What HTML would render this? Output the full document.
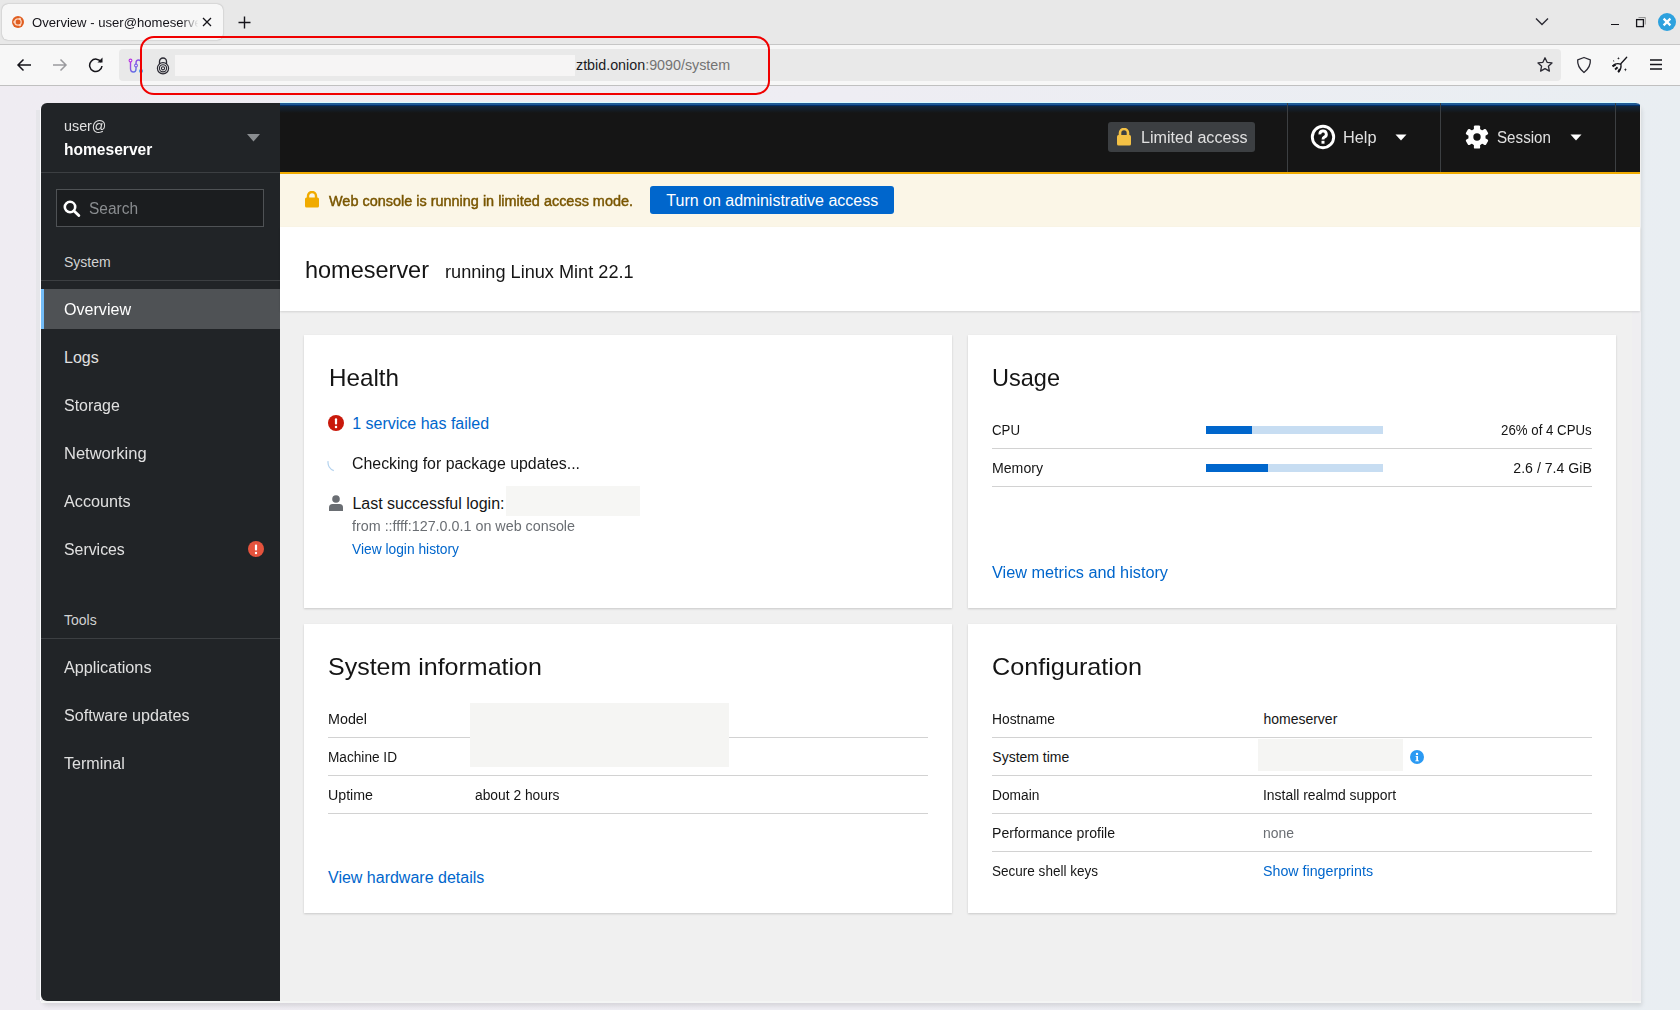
<!DOCTYPE html>
<html><head><meta charset="utf-8"><title>Overview</title>
<style>
*{box-sizing:border-box;margin:0;padding:0}
html,body{width:1680px;height:1010px;overflow:hidden;background:linear-gradient(90deg,#efecf2 0%,#eeedf3 50%,#e9eef2 100%);font-family:"Liberation Sans",sans-serif;position:relative}
.r{position:absolute}
.t{position:absolute;white-space:nowrap}
</style></head><body>
<div class="r" style="left:0px;top:0px;width:1680px;height:44px;background:#e8e8e8;"></div>
<div class="r" style="left:0px;top:44px;width:1680px;height:1px;background:#c6c6c6;"></div>
<div class="r" style="left:0px;top:45px;width:1680px;height:40px;background:#f7f7f7;"></div>
<div class="r" style="left:0px;top:85px;width:1680px;height:1px;background:#c0c0c0;"></div>
<div class="r" style="left:2px;top:4px;width:221px;height:36px;background:#f7f7f7;border-radius:6px;box-shadow:0 0 1.5px rgba(0,0,0,.35)"></div>
<svg class="r" style="left:11px;top:15px" width="14" height="14" viewBox="0 0 14 14"><circle cx="7" cy="7" r="6" fill="#e05e20"/><circle cx="7" cy="7" r="3.2" fill="none" stroke="#fbd3bd" stroke-width="1.3"/><circle cx="3.5" cy="7" r="1.2" fill="#fbd3bd"/><circle cx="8.8" cy="3.9" r="1.2" fill="#fbd3bd"/><circle cx="8.8" cy="10.1" r="1.2" fill="#fbd3bd"/></svg>
<div class="t" style="left:32.00px;top:16.00px;font-size:13.4px;line-height:13.4px;color:#15141a;font-weight:400;width:170px;transform:scaleX(0.978);transform-origin:left center;overflow:hidden;-webkit-mask-image:linear-gradient(90deg,#000 90%,transparent);mask-image:linear-gradient(90deg,#000 90%,transparent)">Overview - user@homeserver</div>
<svg class="r" style="left:202px;top:17px" width="10" height="10" viewBox="0 0 10 10"><path d="M1 1L9 9M9 1L1 9" stroke="#15141a" stroke-width="1.3"/></svg>
<svg class="r" style="left:238px;top:16px" width="13" height="13" viewBox="0 0 13 13"><path d="M6.5 0.5V12.5M0.5 6.5H12.5" stroke="#15141a" stroke-width="1.4"/></svg>
<svg class="r" style="left:1535px;top:17px" width="14" height="9" viewBox="0 0 14 9"><path d="M1 1.5L7 7.5L13 1.5" fill="none" stroke="#2b2a33" stroke-width="1.4"/></svg>
<div class="r" style="left:1611px;top:23.6px;width:8px;height:1.5px;background:#15141a;"></div>
<svg class="r" style="left:1635px;top:16px" width="12" height="12" viewBox="0 0 12 12"><path d="M3.5 1.5H10.3V8.5" fill="none" stroke="#8a8a8a" stroke-width="0.9"/><rect x="1.6" y="3.6" width="6.8" height="7" fill="none" stroke="#15141a" stroke-width="1.3"/></svg>
<svg class="r" style="left:1657px;top:12px" width="20" height="20" viewBox="0 0 20 20"><circle cx="10" cy="10" r="9" fill="#2da1de"/><path d="M6.6 6.6L13.4 13.4M13.4 6.6L6.6 13.4" stroke="#fff" stroke-width="2.2"/></svg>
<svg class="r" style="left:16px;top:58px" width="16" height="14" viewBox="0 0 16 14"><path d="M15 7H2.2M7.5 1.5L2 7L7.5 12.5" fill="none" stroke="#15141a" stroke-width="1.5"/></svg>
<svg class="r" style="left:52px;top:58px" width="16" height="14" viewBox="0 0 16 14"><path d="M1 7H13.8M8.5 1.5L14 7L8.5 12.5" fill="none" stroke="#9a9a9e" stroke-width="1.5"/></svg>
<svg class="r" style="left:88px;top:57px" width="16" height="16" viewBox="0 0 16 16"><path d="M13.2 5.2A6.2 6.2 0 1 0 14 9" fill="none" stroke="#15141a" stroke-width="1.5"/><path d="M9.5 5.5H14.5V0.5Z" fill="#15141a"/></svg>
<div class="r" style="left:119px;top:49px;width:1442px;height:32px;background:#e9e9e9;border-radius:4px"></div>
<svg class="r" style="left:126.5px;top:57.5px" width="16" height="16" viewBox="0 0 16 16"><defs><linearGradient id="pg" x1="0" y1="0" x2="1" y2="1"><stop offset="0" stop-color="#b833e1"/><stop offset="1" stop-color="#3a8ee6"/></linearGradient></defs><path d="M3.5 2.5V10.5Q3.5 14 6.5 14Q9 14 9 11V5Q9 2 11.5 2Q14 2 14 5V13" fill="none" stroke="url(#pg)" stroke-width="1.4"/><circle cx="3.5" cy="2.5" r="1.4" fill="#f9f9fb" stroke="#b833e1" stroke-width="1.1"/><circle cx="9" cy="7.5" r="1.4" fill="#f9f9fb" stroke="#7a5ce5" stroke-width="1.1"/><circle cx="14" cy="13" r="1.4" fill="#f9f9fb" stroke="#3a8ee6" stroke-width="1.1"/></svg>
<svg class="r" style="left:156px;top:57px" width="14" height="18" viewBox="0 0 14 18"><path d="M3.5 7V4.5A3.5 3.5 0 0 1 10.5 4.5V7" fill="none" stroke="#2b2a33" stroke-width="1.3"/><circle cx="7" cy="11.3" r="5.6" fill="none" stroke="#2b2a33" stroke-width="1.2"/><circle cx="7" cy="11.3" r="3.6" fill="none" stroke="#2b2a33" stroke-width="1.1"/><circle cx="7" cy="11.3" r="1.6" fill="none" stroke="#2b2a33" stroke-width="1.1"/></svg>
<div class="r" style="left:175px;top:55px;width:400px;height:21px;background:#f6f5f5;"></div>
<div class="t" style="left:576.00px;top:58.00px;font-size:14.3px;line-height:14.3px;color:#1b1b1f;font-weight:400;">ztbid.onion<span style="color:#737373">:9090/system</span></div>
<svg class="r" style="left:1536px;top:56px" width="18" height="18" viewBox="0 0 18 18"><path d="M9 1.8L11.1 6.3L16 6.9L12.4 10.2L13.4 15.1L9 12.6L4.6 15.1L5.6 10.2L2 6.9L6.9 6.3Z" fill="none" stroke="#2b2a33" stroke-width="1.3" stroke-linejoin="round"/></svg>
<svg class="r" style="left:1575px;top:56px" width="18" height="18" viewBox="0 0 18 18"><path d="M9 1.5L15.3 3.8Q16 11 9 16.5Q2 11 2.7 3.8Z" fill="none" stroke="#2b2a33" stroke-width="1.3" stroke-linejoin="round"/></svg>
<svg class="r" style="left:1611px;top:56px" width="18" height="18" viewBox="0 0 18 18"><path d="M15.7 1.3L9.8 7.7" stroke="#15141a" stroke-width="1.3" stroke-linecap="round"/><path d="M1.4 10Q5.8 6.2 10 8.6Q10.6 12.6 7.4 16.4" fill="none" stroke="#15141a" stroke-width="1.2"/><path d="M4.6 8.6L1.6 10.3M6.6 11.2L4.1 13.4M8.9 13.1L7.2 16" stroke="#15141a" stroke-width="2"/><path d="M7.46 0.8599999999999999Q7.46 2.36 8.96 2.36Q7.46 2.36 7.46 3.86Q7.46 2.36 5.96 2.36Q7.46 2.36 7.46 0.8599999999999999Z" fill="#15141a"/><path d="M14.4 11.799999999999999Q14.4 13.7 15.9 13.7Q14.4 13.7 14.4 15.6Q14.4 13.7 12.9 13.7Q14.4 13.7 14.4 11.799999999999999Z" fill="#15141a"/><path d="M2.2 4L3.6 5.3L2.2 5.6Z" fill="#15141a"/></svg>
<svg class="r" style="left:1649px;top:58px" width="14" height="13" viewBox="0 0 14 13"><path d="M1 2H13M1 6.5H13M1 11H13" stroke="#15141a" stroke-width="1.4"/></svg>
<div class="r" style="left:140px;top:35.9px;width:630px;height:59.3px;background:transparent;border:2.2px solid #f00000;border-radius:14px"></div>
<div class="r" style="left:41px;top:103px;width:1600px;height:900px;background:#f0f0f0;border-radius:6px 6px 0 6px;box-shadow:1px 3px 4px rgba(0,0,0,.10)"></div>
<div class="r" style="left:41px;top:1001px;width:1600px;height:2px;background:#f4f5f4;"></div>
<div class="r" style="left:36px;top:110px;width:4px;height:890px;background:#e6e6ea;"></div>
<div class="r" style="left:40px;top:108px;width:1px;height:893px;background:#fbfbfd;"></div>
<div class="r" style="left:1632px;top:311px;width:9px;height:690px;background:#efeef1;"></div>
<div class="r" style="left:41px;top:103px;width:239px;height:898px;background:#212427;border-radius:6px 0 0 6px"></div>
<div class="t" style="left:64.00px;top:118.00px;font-size:15px;line-height:15px;color:#e0e0e0;font-weight:400;transform:scaleX(0.9548);transform-origin:left center;">user@</div>
<div class="t" style="left:64.00px;top:142.00px;font-size:16px;line-height:16px;color:#ffffff;font-weight:700;transform:scaleX(0.9733);transform-origin:left center;">homeserver</div>
<svg class="r" style="left:247px;top:134px" width="13" height="8" viewBox="0 0 13 8"><path d="M0 0H13L6.5 7.5Z" fill="#8a8d90"/></svg>
<div class="r" style="left:41px;top:172px;width:239px;height:1px;background:#3c3f42;"></div>
<div class="r" style="left:56px;top:189px;width:208px;height:38px;background:#1b1d1f;border:1px solid #4f5255"></div>
<svg class="r" style="left:63px;top:199.5px" width="18" height="17" viewBox="0 0 18 17"><circle cx="7" cy="7" r="5.2" fill="none" stroke="#fff" stroke-width="2.6"/><path d="M10.8 10.8L15.8 15.6" stroke="#fff" stroke-width="2.8" stroke-linecap="round"/></svg>
<div class="t" style="left:89.40px;top:201.00px;font-size:16px;line-height:16px;color:#8a8d90;font-weight:400;transform:scaleX(0.9666);transform-origin:left center;">Search</div>
<div class="t" style="left:64.00px;top:255.00px;font-size:14px;line-height:14px;color:#d2d2d2;font-weight:400;">System</div>
<div class="r" style="left:41px;top:280px;width:239px;height:1px;background:#3c3f42;"></div>
<div class="r" style="left:41px;top:289px;width:239px;height:40px;background:#4f5255;"></div>
<div class="r" style="left:41px;top:289px;width:3px;height:40px;background:#73bcf7;"></div>
<div class="t" style="left:64.00px;top:302.00px;font-size:16px;line-height:16px;color:#ffffff;font-weight:400;transform:scaleX(1.0048);transform-origin:left center;">Overview</div>
<div class="t" style="left:64.00px;top:350.00px;font-size:16px;line-height:16px;color:#e0e0e0;font-weight:400;">Logs</div>
<div class="t" style="left:64.00px;top:398.00px;font-size:16px;line-height:16px;color:#e0e0e0;font-weight:400;transform:scaleX(0.9957);transform-origin:left center;">Storage</div>
<div class="t" style="left:64.00px;top:446.00px;font-size:16px;line-height:16px;color:#e0e0e0;font-weight:400;transform:scaleX(1.0321);transform-origin:left center;">Networking</div>
<div class="t" style="left:64.00px;top:494.00px;font-size:16px;line-height:16px;color:#e0e0e0;font-weight:400;transform:scaleX(1.0135);transform-origin:left center;">Accounts</div>
<div class="t" style="left:64.00px;top:542.00px;font-size:16px;line-height:16px;color:#e0e0e0;font-weight:400;transform:scaleX(0.9910);transform-origin:left center;">Services</div>
<svg class="r" style="left:248px;top:541px" width="16" height="16" viewBox="0 0 16 16"><circle cx="8" cy="8" r="8" fill="#e5533d"/><rect x="6.9" y="3.5" width="2.2" height="6" rx="1" fill="#fff"/><circle cx="8" cy="12" r="1.2" fill="#fff"/></svg>
<div class="t" style="left:64.00px;top:613.00px;font-size:14px;line-height:14px;color:#d2d2d2;font-weight:400;">Tools</div>
<div class="r" style="left:41px;top:638px;width:239px;height:1px;background:#3c3f42;"></div>
<div class="t" style="left:64.00px;top:660.00px;font-size:16px;line-height:16px;color:#e0e0e0;font-weight:400;transform:scaleX(1.0142);transform-origin:left center;">Applications</div>
<div class="t" style="left:64.00px;top:708.00px;font-size:16px;line-height:16px;color:#e0e0e0;font-weight:400;transform:scaleX(1.0078);transform-origin:left center;">Software updates</div>
<div class="t" style="left:64.00px;top:756.00px;font-size:16px;line-height:16px;color:#e0e0e0;font-weight:400;transform:scaleX(1.0056);transform-origin:left center;">Terminal</div>
<div class="r" style="left:280px;top:103px;width:1360px;height:69px;background:#151515;border-top-right-radius:6px;overflow:hidden"></div>
<div class="r" style="left:280px;top:102px;width:1356px;height:1px;background:#d9fbff;"></div>
<div class="r" style="left:280px;top:103px;width:1360px;height:2px;background:#1f5a96;border-top-right-radius:6px 2px"></div>
<div class="r" style="left:280px;top:105px;width:1360px;height:1px;background:#002f6b;"></div>
<div class="r" style="left:280px;top:106px;width:1360px;height:7px;background:linear-gradient(#12263b,#151515);"></div>
<div class="r" style="left:1108px;top:122px;width:147px;height:30px;background:#3c3f42;border-radius:3px"></div>
<svg class="r" style="left:1116px;top:128px" width="16" height="18" viewBox="0 0 16 18"><path d="M4 7.5V5A4 4 0 0 1 12 5V7.5" fill="none" stroke="#f4c145" stroke-width="2.6"/><rect x="1" y="7" width="14" height="10.5" rx="1.5" fill="#f4c145"/></svg>
<div class="t" style="left:1140.50px;top:130.00px;font-size:16px;line-height:16px;color:#e0e0e0;font-weight:400;transform:scaleX(1.0064);transform-origin:left center;">Limited access</div>
<div class="r" style="left:1287px;top:103px;width:1px;height:69px;background:#3c3f42;"></div>
<svg class="r" style="left:1310px;top:124px" width="26" height="26" viewBox="0 0 26 26"><circle cx="13" cy="13" r="10.7" fill="none" stroke="#fff" stroke-width="2.9"/><path d="M9.9 10.4A3.2 3.2 0 1 1 14.4 13.1Q13 13.9 13 15.5" fill="none" stroke="#fff" stroke-width="2.9"/><rect x="11.5" y="16.8" width="3" height="2.9" fill="#fff"/></svg>
<div class="t" style="left:1343.00px;top:130.00px;font-size:16px;line-height:16px;color:#e0e0e0;font-weight:400;transform:scaleX(1.0180);transform-origin:left center;">Help</div>
<svg class="r" style="left:1395px;top:134px" width="12" height="7" viewBox="0 0 12 7"><path d="M0.5 0.5H11.5L6 6.5Z" fill="#fff"/></svg>
<div class="r" style="left:1440px;top:103px;width:1px;height:69px;background:#3c3f42;"></div>
<svg class="r" style="left:1465px;top:125px" width="24" height="24" viewBox="0 0 24 24"><g fill="#fff"><circle cx="12" cy="12" r="8.6"/><rect x="8.9" y="0.4" width="6.2" height="7" rx="1.2" transform="rotate(0 12 12)"/><rect x="8.9" y="0.4" width="6.2" height="7" rx="1.2" transform="rotate(60 12 12)"/><rect x="8.9" y="0.4" width="6.2" height="7" rx="1.2" transform="rotate(120 12 12)"/><rect x="8.9" y="0.4" width="6.2" height="7" rx="1.2" transform="rotate(180 12 12)"/><rect x="8.9" y="0.4" width="6.2" height="7" rx="1.2" transform="rotate(240 12 12)"/><rect x="8.9" y="0.4" width="6.2" height="7" rx="1.2" transform="rotate(300 12 12)"/></g><circle cx="12" cy="12" r="3.7" fill="#151515"/></svg>
<div class="t" style="left:1497.30px;top:130.00px;font-size:16px;line-height:16px;color:#e0e0e0;font-weight:400;transform:scaleX(0.9487);transform-origin:left center;">Session</div>
<svg class="r" style="left:1570px;top:134px" width="12" height="7" viewBox="0 0 12 7"><path d="M0.5 0.5H11.5L6 6.5Z" fill="#fff"/></svg>
<div class="r" style="left:1615px;top:103px;width:1px;height:69px;background:#3c3f42;"></div>
<div class="r" style="left:280px;top:172px;width:1360px;height:55px;background:#fbf6e7;"></div>
<div class="r" style="left:280px;top:172px;width:1360px;height:2px;background:#f0ab00;"></div>
<svg class="r" style="left:304px;top:191px" width="16" height="17" viewBox="0 0 16 17"><path d="M4 7V5A4 4 0 0 1 12 5V7" fill="none" stroke="#f0ab00" stroke-width="2.4"/><rect x="1" y="6.5" width="14" height="10" rx="1.5" fill="#f0ab00"/></svg>
<div class="t" style="left:328.50px;top:194.00px;font-size:14px;line-height:14px;color:#795600;font-weight:400;transform:scaleX(1.0317);transform-origin:left center;-webkit-text-stroke:0.45px #795600;">Web console is running in limited access mode.</div>
<div class="r" style="left:650px;top:186px;width:244px;height:28px;background:#0066cc;border-radius:3px"></div>
<div class="t" style="left:666.30px;top:193.00px;font-size:16px;line-height:16px;color:#ffffff;font-weight:400;">Turn on administrative access</div>
<div class="r" style="left:280px;top:227px;width:1360px;height:84px;background:#ffffff;box-shadow:0 1px 2px rgba(0,0,0,.12)"></div>
<div class="t" style="left:305.00px;top:258.00px;font-size:24px;line-height:24px;color:#151515;font-weight:400;transform:scaleX(0.9786);transform-origin:left center;">homeserver</div>
<div class="t" style="left:445.30px;top:263.00px;font-size:18px;line-height:18px;color:#151515;font-weight:400;transform:scaleX(1.0079);transform-origin:left center;">running Linux Mint 22.1</div>
<div class="r" style="left:304px;top:335px;width:648px;height:273px;background:#ffffff;box-shadow:0 1px 2px rgba(3,3,3,.16)"></div>
<div class="r" style="left:968px;top:335px;width:648px;height:273px;background:#ffffff;box-shadow:0 1px 2px rgba(3,3,3,.16)"></div>
<div class="r" style="left:304px;top:624px;width:648px;height:289px;background:#ffffff;box-shadow:0 1px 2px rgba(3,3,3,.16)"></div>
<div class="r" style="left:968px;top:624px;width:648px;height:289px;background:#ffffff;box-shadow:0 1px 2px rgba(3,3,3,.16)"></div>
<div class="t" style="left:328.80px;top:366.00px;font-size:24px;line-height:24px;color:#151515;font-weight:400;transform:scaleX(1.0090);transform-origin:left center;">Health</div>
<svg class="r" style="left:328px;top:415px" width="16" height="16" viewBox="0 0 16 16"><circle cx="8" cy="8" r="8" fill="#c9190b"/><rect x="6.9" y="3.3" width="2.2" height="6.2" rx="1" fill="#fff"/><circle cx="8" cy="12.1" r="1.25" fill="#fff"/></svg>
<div class="t" style="left:352.20px;top:416.00px;font-size:16px;line-height:16px;color:#0066cc;font-weight:400;">1 service has failed</div>
<svg class="r" style="left:327px;top:456px" width="18" height="18" viewBox="0 0 18 18"><path d="M1.1 5.2A8.5 8.5 0 0 0 6.8 14.6" fill="none" stroke="#b3d2ee" stroke-width="1.2"/></svg>
<div class="t" style="left:352.20px;top:456.00px;font-size:16px;line-height:16px;color:#151515;font-weight:400;transform:scaleX(0.9936);transform-origin:left center;">Checking for package updates...</div>
<svg class="r" style="left:329px;top:495px" width="14" height="16" viewBox="0 0 14 16"><circle cx="7" cy="4" r="3.8" fill="#6a6e73"/><path d="M0 16V12.5Q0 9 3.5 9H10.5Q14 9 14 12.5V16Z" fill="#6a6e73"/></svg>
<div class="t" style="left:352.40px;top:496.00px;font-size:16px;line-height:16px;color:#151515;font-weight:400;">Last successful login:</div>
<div class="r" style="left:506px;top:486px;width:134px;height:30px;background:#f6f6f4;"></div>
<div class="t" style="left:352.40px;top:519.00px;font-size:14px;line-height:14px;color:#6a6e73;font-weight:400;transform:scaleX(1.0233);transform-origin:left center;">from ::ffff:127.0.0.1 on web console</div>
<div class="t" style="left:352.40px;top:542.00px;font-size:14px;line-height:14px;color:#0066cc;font-weight:400;transform:scaleX(0.9845);transform-origin:left center;">View login history</div>
<div class="t" style="left:992.40px;top:366.00px;font-size:24px;line-height:24px;color:#151515;font-weight:400;transform:scaleX(0.9802);transform-origin:left center;">Usage</div>
<div class="t" style="left:992.40px;top:423.00px;font-size:14px;line-height:14px;color:#151515;font-weight:400;transform:scaleX(0.9473);transform-origin:left center;">CPU</div>
<div class="r" style="left:1206px;top:426px;width:177px;height:8px;background:#c7ddf2;"></div>
<div class="r" style="left:1206px;top:426px;width:46px;height:8px;background:#0066cc;"></div>
<div class="t" style="left:1496.29px;top:423.00px;font-size:14px;line-height:14px;color:#151515;font-weight:400;transform:scaleX(0.9466);transform-origin:right center;">26% of 4 CPUs</div>
<div class="r" style="left:992px;top:448px;width:600px;height:1px;background:#d2d2d2;"></div>
<div class="t" style="left:992.40px;top:461.00px;font-size:14px;line-height:14px;color:#151515;font-weight:400;transform:scaleX(1.0087);transform-origin:left center;">Memory</div>
<div class="r" style="left:1206px;top:464px;width:177px;height:8px;background:#c7ddf2;"></div>
<div class="r" style="left:1206px;top:464px;width:62px;height:8px;background:#0066cc;"></div>
<div class="t" style="left:1514.18px;top:461.00px;font-size:14px;line-height:14px;color:#151515;font-weight:400;transform:scaleX(1.0087);transform-origin:right center;">2.6 / 7.4 GiB</div>
<div class="r" style="left:992px;top:486px;width:600px;height:1px;background:#d2d2d2;"></div>
<div class="t" style="left:992.00px;top:565.00px;font-size:16px;line-height:16px;color:#0066cc;font-weight:400;transform:scaleX(1.0167);transform-origin:left center;">View metrics and history</div>
<div class="t" style="left:328.10px;top:655.00px;font-size:24px;line-height:24px;color:#151515;font-weight:400;transform:scaleX(1.0409);transform-origin:left center;">System information</div>
<div class="t" style="left:328.00px;top:712.00px;font-size:14px;line-height:14px;color:#151515;font-weight:400;transform:scaleX(1.0228);transform-origin:left center;">Model</div>
<div class="t" style="left:328.00px;top:750.00px;font-size:14px;line-height:14px;color:#151515;font-weight:400;transform:scaleX(0.9745);transform-origin:left center;">Machine ID</div>
<div class="t" style="left:328.00px;top:788.00px;font-size:14px;line-height:14px;color:#151515;font-weight:400;transform:scaleX(1.0148);transform-origin:left center;">Uptime</div>
<div class="r" style="left:328px;top:737px;width:600px;height:1px;background:#d2d2d2;"></div>
<div class="r" style="left:328px;top:775px;width:600px;height:1px;background:#d2d2d2;"></div>
<div class="r" style="left:328px;top:813px;width:600px;height:1px;background:#d2d2d2;"></div>
<div class="r" style="left:470px;top:703px;width:259px;height:64px;background:#f5f5f3;"></div>
<div class="t" style="left:475.30px;top:788.00px;font-size:14px;line-height:14px;color:#151515;font-weight:400;transform:scaleX(0.9869);transform-origin:left center;">about 2 hours</div>
<div class="t" style="left:328.00px;top:870.00px;font-size:16px;line-height:16px;color:#0066cc;font-weight:400;">View hardware details</div>
<div class="t" style="left:992.30px;top:655.00px;font-size:24px;line-height:24px;color:#151515;font-weight:400;transform:scaleX(1.0507);transform-origin:left center;">Configuration</div>
<div class="t" style="left:992.30px;top:712.00px;font-size:14px;line-height:14px;color:#151515;font-weight:400;transform:scaleX(0.9874);transform-origin:left center;">Hostname</div>
<div class="t" style="left:1263.40px;top:712.00px;font-size:14px;line-height:14px;color:#151515;font-weight:400;">homeserver</div>
<div class="t" style="left:992.30px;top:750.00px;font-size:14px;line-height:14px;color:#151515;font-weight:400;">System time</div>
<div class="t" style="left:992.30px;top:788.00px;font-size:14px;line-height:14px;color:#151515;font-weight:400;transform:scaleX(0.9826);transform-origin:left center;">Domain</div>
<div class="t" style="left:1263.40px;top:788.00px;font-size:14px;line-height:14px;color:#151515;font-weight:400;transform:scaleX(0.9937);transform-origin:left center;">Install realmd support</div>
<div class="t" style="left:992.30px;top:826.00px;font-size:14px;line-height:14px;color:#151515;font-weight:400;transform:scaleX(1.0068);transform-origin:left center;">Performance profile</div>
<div class="t" style="left:1263.40px;top:826.00px;font-size:14px;line-height:14px;color:#6a6e73;font-weight:400;transform:scaleX(0.9954);transform-origin:left center;">none</div>
<div class="t" style="left:992.30px;top:864.00px;font-size:14px;line-height:14px;color:#151515;font-weight:400;transform:scaleX(0.9661);transform-origin:left center;">Secure shell keys</div>
<div class="t" style="left:1263.40px;top:864.00px;font-size:14px;line-height:14px;color:#0066cc;font-weight:400;transform:scaleX(1.0170);transform-origin:left center;">Show fingerprints</div>
<div class="r" style="left:992px;top:737px;width:600px;height:1px;background:#d2d2d2;"></div>
<div class="r" style="left:992px;top:775px;width:600px;height:1px;background:#d2d2d2;"></div>
<div class="r" style="left:992px;top:813px;width:600px;height:1px;background:#d2d2d2;"></div>
<div class="r" style="left:992px;top:851px;width:600px;height:1px;background:#d2d2d2;"></div>
<div class="r" style="left:1258px;top:739px;width:145px;height:32px;background:#f5f5f3;"></div>
<svg class="r" style="left:1410px;top:750px" width="14" height="14" viewBox="0 0 14 14"><circle cx="7" cy="7" r="7" fill="#2b9af3"/><circle cx="7" cy="3.9" r="1.2" fill="#fff"/><path d="M5.6 6H8V10.5H9V11.3H5.2V10.5H6.3V6.8H5.6Z" fill="#fff"/></svg>
</body></html>
